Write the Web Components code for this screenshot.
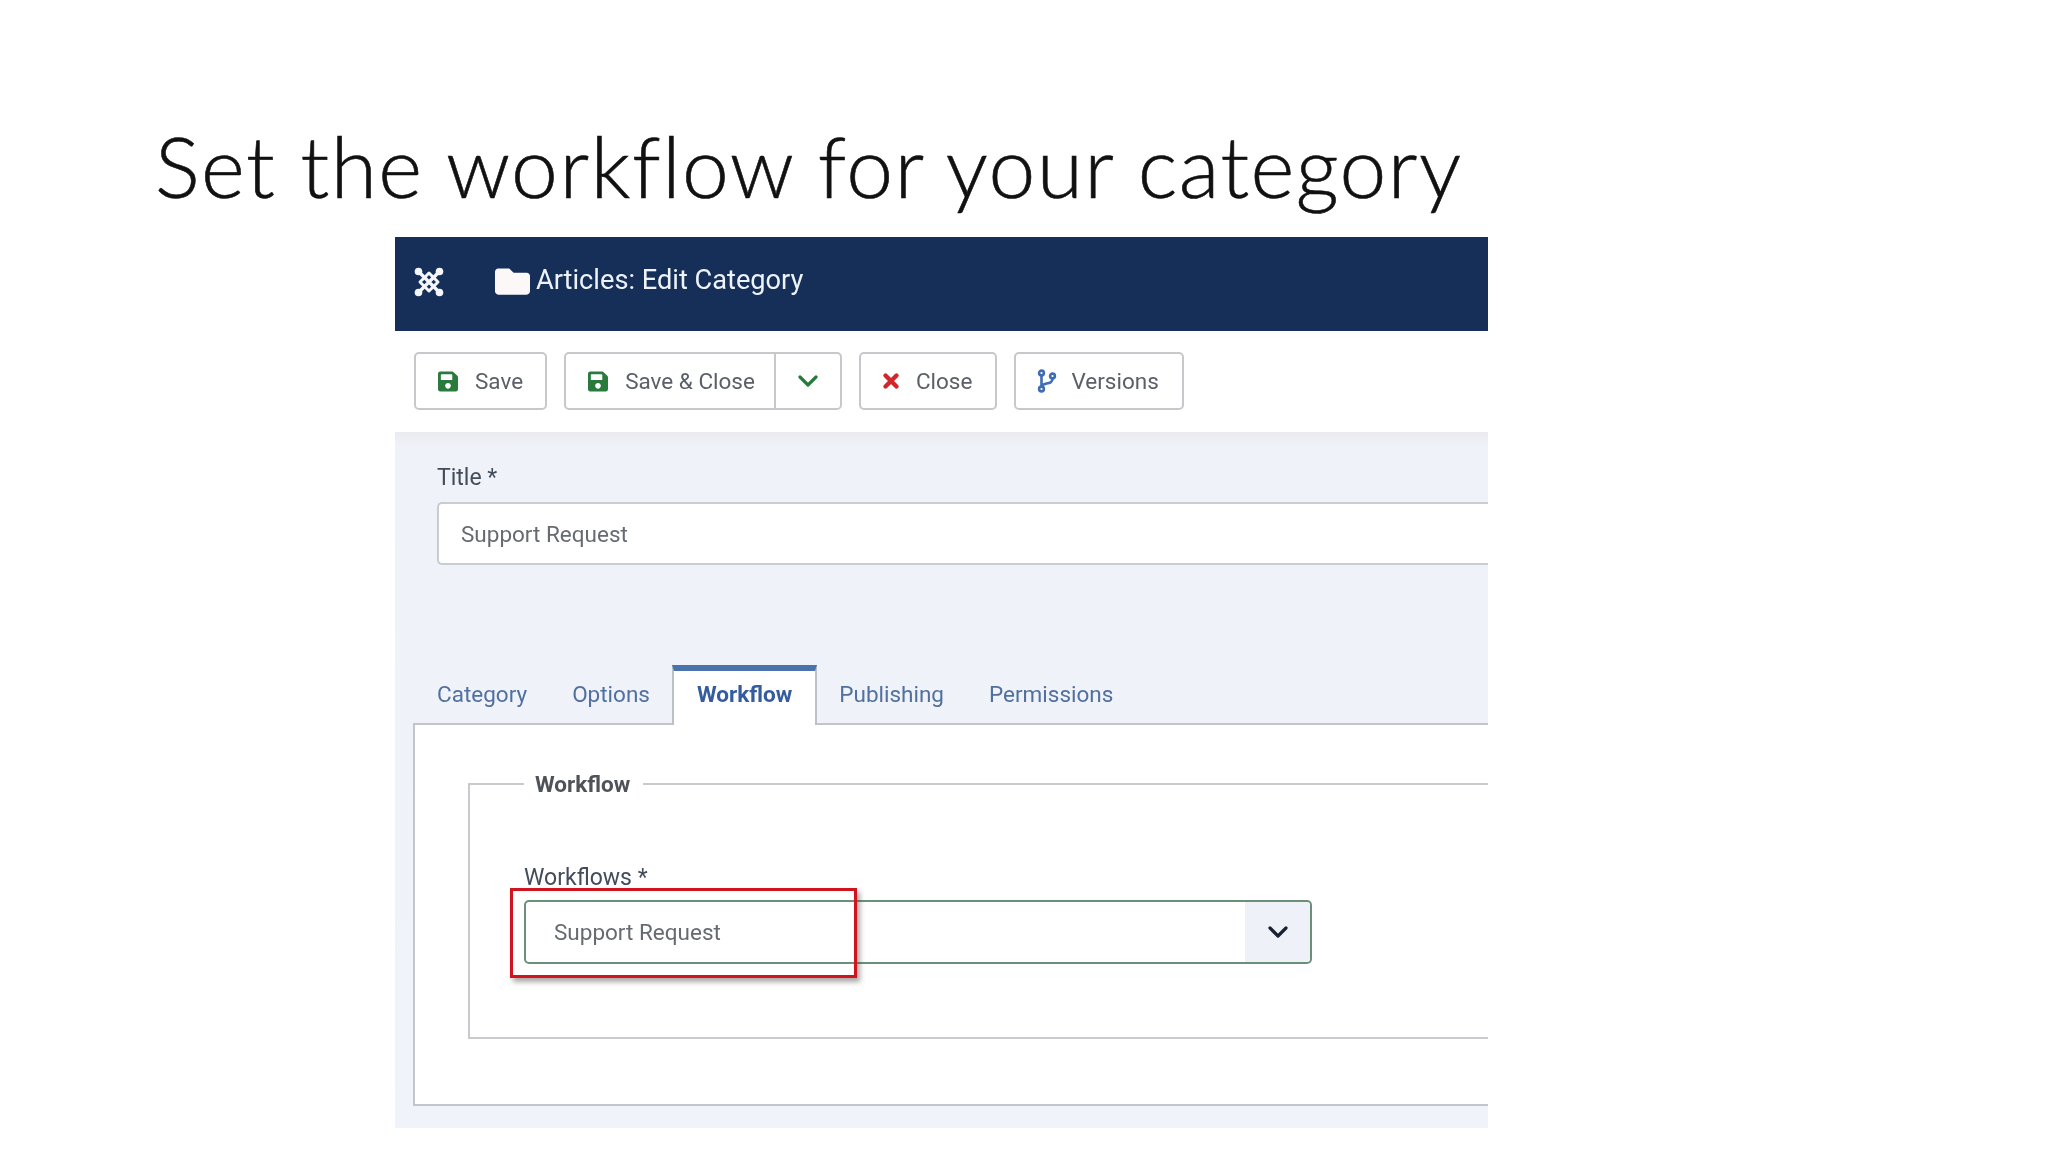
<!DOCTYPE html>
<html lang="en">
<head>
<meta charset="utf-8">
<title>Set the workflow for your category</title>
<style>
  html, body { margin: 0; padding: 0; background: #fff; }
</style>
</head>
<body>
<slide-page>
  <span slot="title">Set the workflow for your category</span>
  <admin-shot>
    <admin-header slot="header">Articles: Edit Category</admin-header>
    <tool-bar slot="toolbar">
      <tool-button icon="save">Save</tool-button>
      <tool-button icon="save" split>Save &amp; Close</tool-button>
      <tool-button icon="close">Close</tool-button>
      <tool-button icon="versions">Versions</tool-button>
    </tool-bar>
    <title-field slot="form" label="Title *" value="Support Request"></title-field>
    <tab-strip slot="form">
      <span>Category</span>
      <span>Options</span>
      <span active>Workflow</span>
      <span>Publishing</span>
      <span>Permissions</span>
    </tab-strip>
    <tab-panel slot="form" legend="Workflow">
      <select-field label="Workflows *" value="Support Request"></select-field>
    </tab-panel>
  </admin-shot>
</slide-page>

<script>
const ICONS = {
  save: `<svg width="20" height="21" viewBox="0 32 448 448" fill="#2a7a3e"><path d="M433.941 129.941l-83.882-83.882A48 48 0 0 0 316.118 32H48C21.49 32 0 53.49 0 80v352c0 26.51 21.49 48 48 48h352c26.51 0 48-21.49 48-48V163.882a48 48 0 0 0-14.059-33.941zM224 416c-35.346 0-64-28.654-64-64 0-35.346 28.654-64 64-64s64 28.654 64 64c0 35.346-28.654 64-64 64zm96-304.52V212c0 6.627-5.373 12-12 12H76c-6.627 0-12-5.373-12-12V108c0-6.627 5.373-12 12-12h228.52c3.183 0 6.235 1.264 8.485 3.515l3.48 3.48A11.996 11.996 0 0 1 320 111.48z"/></svg>`,
  close: `<svg width="18" height="18" viewBox="0 0 18 18" stroke="#d0262c" stroke-width="4.4" stroke-linecap="round"><path d="M3.5 3.5l11 11M14.5 3.5l-11 11"/></svg>`,
  versions: `<svg width="20" height="24" viewBox="0 0 20 24" fill="none" stroke="#3f6cb4" stroke-width="2.6"><circle cx="4.5" cy="4" r="2.4"/><circle cx="4.5" cy="20" r="2.4"/><circle cx="15.5" cy="7" r="2.4"/><path d="M4.5 6.500v11M15.500 9.500c0 4-3 4.500-6 5-2.500.5-4.500 1-5 3"/></svg>`,
  chevron: `<svg width="20" height="12" viewBox="0 0 20 12" fill="none" stroke="currentColor" stroke-width="3.200" stroke-linecap="round" stroke-linejoin="round"><path d="M2 2l8 8 8-8"/></svg>`
};

class SlidePage extends HTMLElement {
  constructor() {
    super();
    this.shadowDOM = this.attachShadow({ mode: 'open' });
  }

  connectedCallback() {
    this.shadowDOM.innerHTML = `
      <style>
        :host { display: block; width: 2048px; height: 1152px; overflow: hidden; background: #fff; }
        h1 {
          box-sizing: border-box;
          height: 237px;
          margin: 0;
          padding: 116px 0 0 155px;
          font: 300 84px/1.2 Lato, "Open Sans", sans-serif;
          font-variant-ligatures: none;
          letter-spacing: 1.420px;
          -webkit-text-stroke: 0.6px #111;
          color: #111;
          white-space: nowrap;
        }
        .shot { margin-left: 395px; width: 1093px; }
      </style>
      <h1><slot name="title"></slot></h1>
      <div class="shot"><slot></slot></div>
    `;
  }
}

class AdminShot extends HTMLElement {
  constructor() {
    super();
    this.shadowDOM = this.attachShadow({ mode: 'open' });
  }

  connectedCallback() {
    this.shadowDOM.innerHTML = `
      <style>
        :host {
          display: block;
          font-family: Roboto, "Liberation Sans", sans-serif;
          filter: blur(0.45px);
        }
        .form {
          height: 696px;
          display: flex;
          flex-direction: column;
          background: linear-gradient(#e9ebef, #eff2f8 14px, #f0f3fa);
        }
      </style>
      <slot name="header"></slot>
      <slot name="toolbar"></slot>
      <div class="form"><slot name="form"></slot></div>
    `;
  }
}

class AdminHeader extends HTMLElement {
  constructor() {
    super();
    this.shadowDOM = this.attachShadow({ mode: 'open' });
  }

  connectedCallback() {
    this.shadowDOM.innerHTML = `
      <style>
        :host {
          display: flex;
          align-items: center;
          box-sizing: border-box;
          height: 94px;
          padding: 0 0 5px 18px;
          background: #152f59;
          color: #eef3fa;
          font-size: 27.200px;
        }
        .logo { margin-right: 50px; }
        .folder { margin-right: 6px; }
        .label { margin-bottom: 3px; }
      </style>
      <svg class="logo" width="32" height="32" viewBox="0 0 32 32" fill="none" stroke="#f3f6fa" stroke-linecap="round" stroke-linejoin="round">
        <path stroke-width="3.400" d="M6 6l20 20M26 6L6 26"/>
        <path stroke-width="3" d="M16 7l9 9-9 9-9-9z"/>
        <g fill="#f3f6fa" stroke="none">
          <circle cx="5.500" cy="5.500" r="3.800"/><circle cx="26.500" cy="5.500" r="3.800"/>
          <circle cx="5.500" cy="26.500" r="3.800"/><circle cx="26.500" cy="26.500" r="3.800"/>
        </g>
      </svg>
      <svg class="folder" width="35" height="27" viewBox="0 64 512 384" fill="#fdf8f8"><path d="M464 128H272l-64-64H48C21.49 64 0 85.49 0 112v288c0 26.51 21.49 48 48 48h416c26.51 0 48-21.49 48-48V176c0-26.51-21.49-48-48-48z"/></svg>
      <span class="label"><slot></slot></span>
    `;
  }
}

class ToolBar extends HTMLElement {
  constructor() {
    super();
    this.shadowDOM = this.attachShadow({ mode: 'open' });
  }

  connectedCallback() {
    this.shadowDOM.innerHTML = `
      <style>
        :host {
          display: flex;
          gap: 17px;
          box-sizing: border-box;
          height: 101px;
          padding: 21px 0 0 19px;
          background: #fff;
        }
      </style>
      <slot></slot>
    `;
  }
}

class ToolButton extends HTMLElement {
  constructor() {
    super();
    this.shadowDOM = this.attachShadow({ mode: 'open' });
  }

  connectedCallback() {
    const icon = ICONS[this.getAttribute('icon')];
    const split = this.hasAttribute('split')
      ? `<span class="split">${ICONS.chevron}</span>` : '';
    this.shadowDOM.innerHTML = `
      <style>
        :host {
          display: flex;
          box-sizing: border-box;
          height: 58px;
          border: 2px solid #c6c8cb;
          border-radius: 5px;
          background: #fff;
          color: #5b6068;
          font-size: 22.500px;
        }
        .main { display: flex; align-items: center; gap: 17px; padding: 0 22px; }
        :host([split]) .main { padding-right: 19px; }
        :host([icon="close"]) .main { gap: 16px; padding: 0 23px 0 21px; }
        :host([icon="versions"]) .main { gap: 14px; padding: 0 23px 0 21px; }
        .icon { display: flex; }
        .split {
          display: flex;
          align-items: center;
          justify-content: center;
          width: 64px;
          border-left: 2px solid #c6c8cb;
          color: #2a7a3e;
        }
      </style>
      <span class="main"><span class="icon">${icon}</span><span><slot></slot></span></span>
      ${split}
    `;
  }
}

class TitleField extends HTMLElement {
  constructor() {
    super();
    this.shadowDOM = this.attachShadow({ mode: 'open' });
  }

  connectedCallback() {
    this.shadowDOM.innerHTML = `
      <style>
        :host { display: block; padding: 31px 0 0 42px; }
        label { display: block; height: 39px; font-size: 23px; line-height: 30px; color: #434c5a; }
        .input {
          box-sizing: border-box;
          height: 63px;
          padding-left: 22px;
          display: flex;
          align-items: center;
          background: #fff;
          border: 2px solid #c9ccd0;
          border-right: 0;
          border-radius: 5px 0 0 5px;
          color: #666b72;
          font-size: 22.500px;
        }
      </style>
      <label>${this.getAttribute('label')}</label>
      <div class="input">${this.getAttribute('value')}</div>
    `;
  }
}

class TabStrip extends HTMLElement {
  constructor() {
    super();
    this.shadowDOM = this.attachShadow({ mode: 'open' });
  }

  connectedCallback() {
    this.shadowDOM.innerHTML = `
      <style>
        :host {
          display: flex;
          height: 60px;
          margin: 100px 0 -2px 19.500px;
          position: relative;
          z-index: 1;
          font-size: 22.500px;
          color: #50709f;
        }
        ::slotted(span) {
          box-sizing: border-box;
          height: 60px;
          padding: 14px 22.500px 0;
          line-height: 30px;
        }
        ::slotted(span[active]) {
          padding: 8px 22.500px 0;
          background: #fff;
          border: solid #bcc1c9;
          border-width: 6px 2px 0;
          border-top-color: #4a72ad;
          color: #345c9f;
          font-weight: 700;
        }
      </style>
      <slot></slot>
    `;
  }
}

class TabPanel extends HTMLElement {
  constructor() {
    super();
    this.shadowDOM = this.attachShadow({ mode: 'open' });
  }

  connectedCallback() {
    this.shadowDOM.innerHTML = `
      <style>
        :host {
          display: block;
          box-sizing: border-box;
          height: 383px;
          margin-left: 18px;
          padding: 46px 0 0 53px;
          background: #fff;
          border: solid #c2c6cc;
          border-width: 2px 0 2px 2px;
        }
        fieldset {
          box-sizing: border-box;
          height: 268px;
          margin: 0;
          padding: 66px 0 0 54px;
          border: solid #c8cace;
          border-width: 2px 0 2px 2px;
        }
        legend {
          padding: 0 13px 0 11px;
          font-size: 22.500px;
          font-weight: 700;
          color: #4f5358;
        }
      </style>
      <fieldset>
        <legend>${this.getAttribute('legend')}</legend>
        <slot></slot>
      </fieldset>
    `;
  }
}

class SelectField extends HTMLElement {
  constructor() {
    super();
    this.shadowDOM = this.attachShadow({ mode: 'open' });
  }

  connectedCallback() {
    this.shadowDOM.innerHTML = `
      <style>
        :host { display: block; position: relative; width: 788px; }
        label { display: block; height: 37px; font-size: 23px; line-height: 30px; color: #434c5a; }
        .select {
          box-sizing: border-box;
          display: flex;
          height: 64px;
          border: 2px solid #6b9079;
          border-radius: 5px;
          background: #fff;
          color: #666b72;
          font-size: 22.500px;
        }
        .value { flex: 1; display: flex; align-items: center; padding-left: 28px; }
        .arrow {
          display: flex;
          align-items: center;
          justify-content: center;
          width: 65px;
          background: #eef2f8;
          border-radius: 0 4px 4px 0;
          color: #1a2230;
        }
        .mark {
          position: absolute;
          left: -14px;
          top: 25px;
          box-sizing: border-box;
          width: 347px;
          height: 90px;
          border: 3px solid #d0141e;
          box-shadow: 3px 4px 5px rgba(70, 60, 60, .45);
        }
      </style>
      <label>${this.getAttribute('label')}</label>
      <div class="select">
        <span class="value">${this.getAttribute('value')}</span>
        <span class="arrow">${ICONS.chevron}</span>
      </div>
      <div class="mark"></div>
    `;
  }
}

customElements.define('slide-page', SlidePage);
customElements.define('admin-shot', AdminShot);
customElements.define('admin-header', AdminHeader);
customElements.define('tool-bar', ToolBar);
customElements.define('tool-button', ToolButton);
customElements.define('title-field', TitleField);
customElements.define('tab-strip', TabStrip);
customElements.define('tab-panel', TabPanel);
customElements.define('select-field', SelectField);
</script>
</body>
</html>
